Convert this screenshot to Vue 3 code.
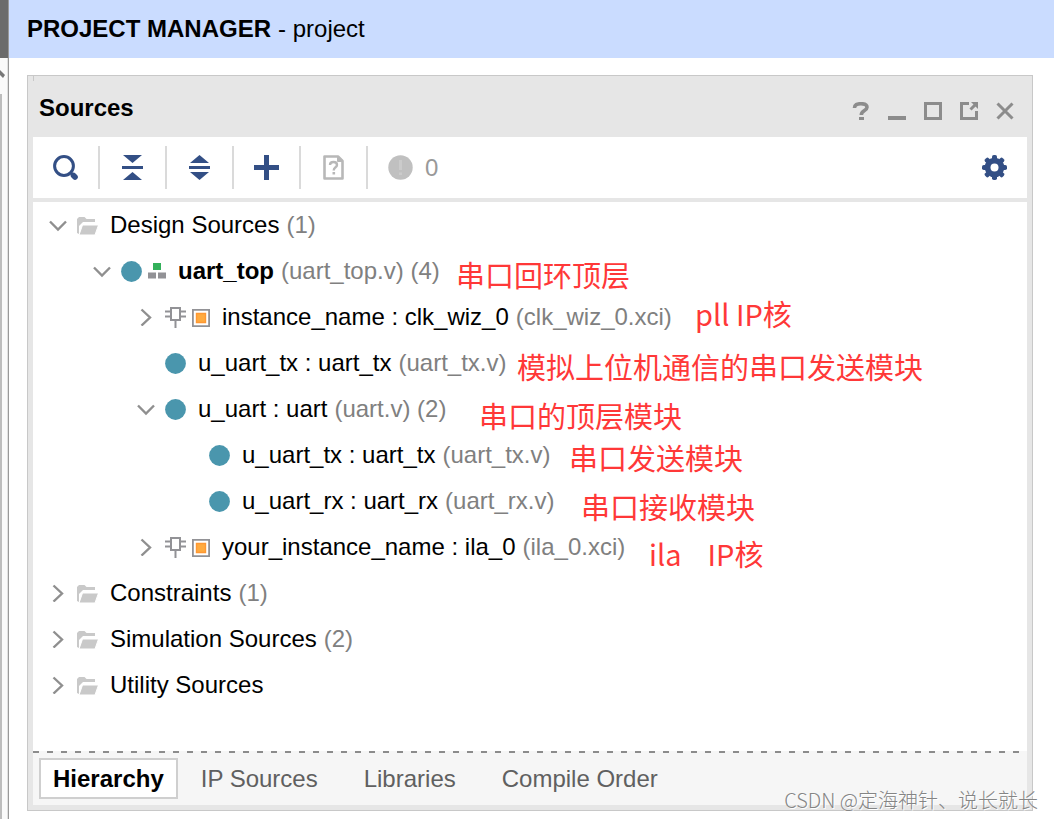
<script setup>
import { ref } from 'vue'

const rows = [
  { level: 0, open: true, icons: ['folder'], name: 'Design Sources', note: '(1)' },
  { level: 1, open: true, icons: ['dot', 'top'], name: 'uart_top', bold: true, note: '(uart_top.v) (4)' },
  { level: 2, open: false, icons: ['pin', 'core'], name: 'instance_name : clk_wiz_0', note: '(clk_wiz_0.xci)' },
  { level: 2, leaf: true, icons: ['dot'], name: 'u_uart_tx : uart_tx', note: '(uart_tx.v)' },
  { level: 2, open: true, icons: ['dot'], name: 'u_uart : uart', note: '(uart.v) (2)' },
  { level: 3, leaf: true, icons: ['dot'], name: 'u_uart_tx : uart_tx', note: '(uart_tx.v)' },
  { level: 3, leaf: true, icons: ['dot'], name: 'u_uart_rx : uart_rx', note: '(uart_rx.v)' },
  { level: 2, open: false, icons: ['pin', 'core'], name: 'your_instance_name : ila_0', note: '(ila_0.xci)' },
  { level: 0, open: false, icons: ['folder'], name: 'Constraints', note: '(1)' },
  { level: 0, open: false, icons: ['folder'], name: 'Simulation Sources', note: '(2)' },
  { level: 0, open: false, icons: ['folder'], name: 'Utility Sources', note: '' }
]

// Remarks placed freely over the tree
const remarks = [
  { x: 423, y: 52, text: '串口回环顶层' },
  { x: 662, y: 91, text: 'pll IP核' },
  { x: 484, y: 144, text: '模拟上位机通信的串口发送模块' },
  { x: 446, y: 193, text: '串口的顶层模块' },
  { x: 536, y: 235, text: '串口发送模块' },
  { x: 548, y: 284, text: '串口接收模块' },
  { x: 616, y: 331, text: 'ila\u00a0\u00a0\u00a0\u00a0IP核' }
]

const tabs = ['Hierarchy', 'IP Sources', 'Libraries', 'Compile Order']
const active = ref('Hierarchy')
</script>

<template>
  <div class="app">
    <aside class="edge" aria-hidden="true">
      <div class="edge-head"></div>
      <div class="edge-body">
        <svg width="5" height="10" viewBox="0 0 5 10"><path d="M0 0L5 5L3 8L0 5Z" fill="#777" /></svg>
        <div class="edge-bar"></div>
      </div>
    </aside>

    <div class="main">
      <header class="title"><h1>PROJECT MANAGER</h1><span>- project</span></header>

      <section class="panel">
        <div class="panel-head">
          <h2>Sources</h2>
          <div class="controls">
            <button aria-label="Help"><svg width="18" height="18" viewBox="0 0 18 18"><path d="M2.500 6C2.500 2.800 5 1.700 9 1.700S15 2.900 15 5.300C15 8.800 9.300 8.200 9.300 13" fill="none" stroke="#8c8c8c" stroke-width="3.600" /><path d="M7 15h5v3H7z" fill="#8c8c8c" /></svg></button>
            <button aria-label="Minimize"><svg width="18" height="18" viewBox="0 0 18 18"><path d="M0 14h18v4H0z" fill="#8c8c8c" /></svg></button>
            <button aria-label="Maximize"><svg width="18" height="18" viewBox="0 0 18 18"><path d="M1.500 1.500h15v15h-15z" fill="none" stroke="#8c8c8c" stroke-width="3" /></svg></button>
            <button aria-label="Float"><svg width="18" height="18" viewBox="0 0 18 18"><path d="M9 1.500H1.500v15h15V9" fill="none" stroke="#8c8c8c" stroke-width="3" /><path d="M10.500 7.500L15 3" stroke="#8c8c8c" stroke-width="3" /><path d="M11 0h7v7z" fill="#8c8c8c" /></svg></button>
            <button aria-label="Close"><svg width="18" height="18" viewBox="0 0 18 18"><path d="M1.500 1.500L16.500 16.500M16.500 1.500L1.500 16.500" stroke="#8c8c8c" stroke-width="3" /></svg></button>
          </div>
        </div>

        <div class="toolbar">
          <button class="tool" aria-label="Search"><svg width="25" height="25" viewBox="0 0 25 25"><circle cx="11" cy="11" r="9.400" fill="none" stroke="#334f85" stroke-width="3" /><path d="M20.500 20.500L22 22" stroke="#334f85" stroke-width="5.600" stroke-linecap="round" /><path d="M17 17L20 20" stroke="#334f85" stroke-width="2.500" /></svg></button>
          <button class="tool" aria-label="Collapse all"><svg width="21" height="25" viewBox="0 0 21 25"><path d="M1 0h19l-9.500 8zM0 11h21v3H0zM1 25h19l-9.500-8z" fill="#334f85" /></svg></button>
          <button class="tool" aria-label="Expand all"><svg width="21" height="25" viewBox="0 0 21 25"><path d="M1 8L10.500 0L20 8zM0 11h21v3H0zM1 17h19l-9.500 8z" fill="#334f85" /></svg></button>
          <button class="tool" aria-label="Add sources"><svg width="25" height="25" viewBox="0 0 25 25"><path d="M10 0h5v10h10v5H15v10h-5V15H0v-5h10z" fill="#334f85" /></svg></button>
          <button class="tool" aria-label="File details"><svg width="21" height="25" viewBox="0 0 21 25"><path d="M1.500 1.500h13.500l4.500 4.500v17.500h-18z" fill="none" stroke="#b8b8b8" stroke-width="2.600" stroke-linejoin="round" /><path d="M14.500 1v5.500h5" fill="#b8b8b8" stroke="#b8b8b8" stroke-width="1" /><path d="M7 10C7 7.500 8.500 7 10.500 7S14 8 14 10C14 12.500 10.700 12 10.700 15.500" fill="none" stroke="#b8b8b8" stroke-width="2.400" /><path d="M9.500 17h2.600v2.500H9.500z" fill="#b8b8b8" /></svg></button>
          <button class="messages" aria-label="0 messages"><svg width="25" height="25" viewBox="0 0 25 25"><circle cx="12.500" cy="12.500" r="12.200" fill="#c0c0c0" /><path d="M12.500 5v10M12.500 17.500v2.500" stroke="#cbcbcb" stroke-width="3" /></svg><span>0</span></button>
          <button class="settings" aria-label="Settings"><svg width="25" height="25" viewBox="-12.500 -12.500 25 25"><g fill="#334f85"><rect v-for="a in 4" :key="a" x="-2.500" y="-12.500" width="5" height="25" rx="1.800" :transform="`rotate(${a * 45})`" /><circle r="9.800" /></g><circle r="4" fill="#fff" /></svg></button>
        </div>

        <div class="tree-area">
          <ul class="tree">
            <li v-for="(row, i) in rows" :key="i" class="row" :class="{ leaf: row.leaf }" :style="{ '--level': row.level }">
              <button v-if="!row.leaf" class="toggle" :aria-expanded="row.open" :aria-label="row.name">
                <svg width="18" height="18" viewBox="0 0 18 18" fill="none" stroke="#8f8f8f" stroke-width="2.400"><path v-if="row.open" d="M1 5.500L9 13.500L17 5.500" /><path v-else d="M4.500 1.500L13 9.500L4.500 17.500" /></svg>
              </button>
              <span class="icons">
                <template v-for="icon in row.icons" :key="icon">
                  <svg v-if="icon === 'folder'" width="21" height="19" viewBox="0 -1 21 19"><path d="M0 16V2L2 0H7.500L9.500 2H18V5H6L2 9V17z" fill="#c9c9c9" /><path d="M5.500 8H21.500L18 18H2z" fill="#c9c9c9" stroke="#fff" stroke-width="1" /></svg>
                  <svg v-else-if="icon === 'dot'" width="21" height="21" viewBox="0 0 21 21"><circle cx="10.500" cy="10.500" r="10.400" fill="#4a96ad" /></svg>
                  <svg v-else-if="icon === 'top'" width="18" height="16" viewBox="0 0 18 16"><path d="M5 0h8v7H5z" fill="#33b05a" /><path d="M0 9.500h8v6H0zM10 9.500h8v6h-8z" fill="#929296" /></svg>
                  <svg v-else-if="icon === 'pin'" width="21" height="21" viewBox="0 0 21 21" fill="none" stroke="#929296" stroke-width="2"><path d="M6 1h9v12H6zM10.500 13v8M0 4.500h6M0 9.500h6M15 4.500h6M15 9.500h6" /></svg>
                  <svg v-else width="18" height="20" viewBox="0 -2 18 20"><path d="M.9.9h16.200v16.200H.9z" fill="#fff" stroke="#929296" stroke-width="1.800" /><path d="M4.500 4.500h9v9h-9z" fill="#ffab40" stroke="#ff9833" stroke-width="1.400" /></svg>
                </template>
              </span>
              <span :class="{ bold: row.bold }">{{ row.name }}</span>
              <span class="note">{{ row.note }}</span>
            </li>
          </ul>
          <p v-for="r in remarks" :key="r.y" class="remark" :style="{ left: r.x + 'px', top: r.y + 'px' }">{{ r.text }}</p>
        </div>

        <nav class="tabs">
          <button v-for="t in tabs" :key="t" class="tab" :class="{ active: t === active }" @click="active = t">{{ t }}</button>
        </nav>
      </section>
    </div>
    <div class="watermark">CSDN @定海神针、说长就长</div>
  </div>
</template>

<style>
body { margin: 0; background: #fff; }
</style>

<style scoped>
* { box-sizing: border-box; }
.app {
  position: relative;
  display: flex;
  min-height: 100vh;
  font: 24px/30px "Liberation Sans", "Noto Sans CJK SC", sans-serif;
  color: #000;
  overflow: hidden;
}
button { padding: 0; border: 0; background: none; font: inherit; color: inherit; cursor: pointer; }
svg { display: block; flex: none; }

.edge { display: flex; flex-direction: column; flex: none; width: 9px; border-right: 1px solid #999; }
.edge-head { height: 58px; background: #6b6b6b; }
.edge-body { flex: 1; display: flex; flex-direction: column; padding-top: 12px; gap: 14px; background: #fafafa; border-right: 1px solid #e0e0e0; }
.edge-bar { flex: 1; width: 2px; background: #bdbdbd; }

.main { flex: 1; min-width: 0; display: flex; flex-direction: column; }
.title { display: flex; align-items: center; gap: 7px; height: 58px; padding: 0 18px; background: #cadcff; }
h1, h2 { margin: 0; font-size: 24px; line-height: 30px; font-weight: bold; }

.panel {
  flex: 1;
  display: flex;
  flex-direction: column;
  margin: 17px 21px 8px 18px;
  padding: 0 5px 5px;
  background: linear-gradient(#c8c8c8, #c8c8c8) 5px 0 / 1px 5px no-repeat #e6e6e6;
  border: 1px solid #c8c8c8;
}
.panel-head { display: flex; align-items: center; justify-content: space-between; height: 61px; padding: 2px 13px 0 6px; }
.controls { display: flex; gap: 18px; padding-top: 6px; }

.toolbar { display: flex; align-items: center; height: 61px; margin-bottom: 4px; background: #fff; }
.tool { display: flex; align-items: center; justify-content: center; width: 67px; height: 43px; border-right: 2px solid #dadada; }
.messages { display: flex; align-items: center; gap: 12px; padding-left: 20px; color: #999; }
.settings { margin-left: auto; padding-right: 20px; }

.tree-area { position: relative; flex: 1; background: #fff; }
.tree { margin: 0; padding: 0; list-style: none; }
.row { display: flex; align-items: center; height: 46px; padding-left: calc(16px + 44px * var(--level)); white-space: nowrap; }
.row.leaf { padding-left: calc(44px + 44px * var(--level)); }
.toggle { margin-right: 10px; }
.icons { display: flex; align-items: center; gap: 6px; margin-right: 12px; }
.bold { font-weight: bold; }
.note { margin-left: 7px; color: #808080; }

.remark {
  position: absolute;
  margin: 0;
  font: 29px/40px "Noto Sans CJK SC", sans-serif;
  color: #ff3838;
  white-space: nowrap;
}

.tabs { display: flex; align-items: center; height: 54px; padding: 1px 6px 0; background: linear-gradient(90deg, #8c8c8c 6px, transparent 6px) 0 0 / 14px 2px repeat-x #f6f6f6; }
.tab { height: 41px; padding: 0 23px; color: #606060; white-space: nowrap; }
.tab.active { padding: 0 12px; background: #fff; border: 2px solid #cfcfcf; color: #000; font-weight: bold; }

.watermark {
  position: absolute;
  right: 16px;
  bottom: 4px;
  font: 300 20px/30px "Noto Sans CJK SC", sans-serif;
  color: #858585;
  text-shadow: 1px 1px 0 #fff;
}
</style>
